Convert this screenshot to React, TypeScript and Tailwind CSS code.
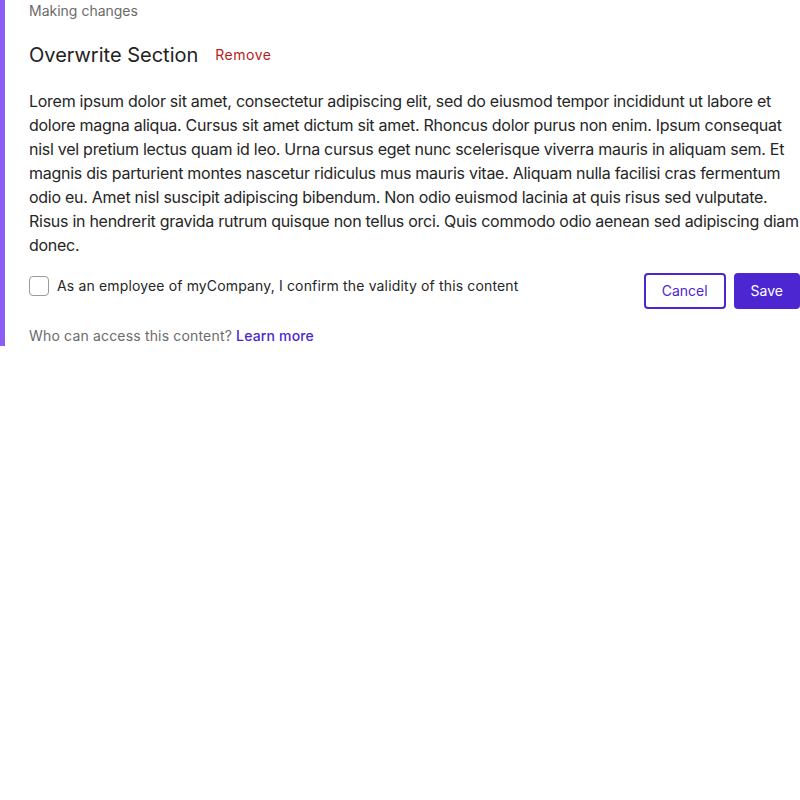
import { useState } from "react";

const body =
	"Lorem ipsum dolor sit amet, consectetur adipiscing elit, sed do eiusmod tempor incididunt ut labore et dolore magna aliqua. Cursus sit amet dictum sit amet. Rhoncus dolor purus non enim. Ipsum consequat nisl vel pretium lectus quam id leo. Urna cursus eget nunc scelerisque viverra mauris in aliquam sem. Et magnis dis parturient montes nascetur ridiculus mus mauris vitae. Aliquam nulla facilisi cras fermentum odio eu. Amet nisl suscipit adipiscing bibendum. Non odio euismod lacinia at quis risus sed vulputate. Risus in hendrerit gravida rutrum quisque non tellus orci. Quis commodo odio aenean sed adipiscing diam donec.";

const App = () => {
	const [confirmed, setConfirmed] = useState<boolean>(false);

	return (
		<div className="min-h-screen bg-white font-['Inter',sans-serif]">
			<div className="flex">
				<div className="w-[5px] shrink-0 bg-[#8b5cf6]" />
				<div className="flex-1 pl-6 pt-px">
					<p className="text-sm leading-5 text-[#6b6b6b]">Making changes</p>

					<div className="mt-5 flex items-center">
						<h2 className="text-xl leading-7 text-[#222222]">
							Overwrite Section
						</h2>
						<button className="ml-[17px] text-sm leading-5 tracking-[0.5px] text-[#b91c1c]">
							Remove
						</button>
					</div>

					<p className="mt-5 text-base leading-6 tracking-[-0.27px] text-[#262626]">
						{body}
					</p>

					<div className="mt-4 flex items-start justify-between">
						<label className="flex items-center gap-2 pt-[3px]">
							<input
								type="checkbox"
								checked={confirmed}
								onChange={(e) => setConfirmed(e.target.checked)}
								className="h-5 w-5 appearance-none rounded border border-[#9a9a9a] bg-white"
							/>
							<span className="text-sm leading-5 tracking-[0.15px] text-[#262626]">
								As an employee of myCompany, I confirm the validity of this
								content
							</span>
						</label>
						<div className="flex gap-2">
							<button className="h-9 rounded border-2 border-[#4b26d1] px-4 text-sm text-[#4b26d1]">
								Cancel
							</button>
							<button className="h-9 rounded bg-[#4b26d1] px-[17px] text-sm text-white">
								Save
							</button>
						</div>
					</div>

					<p className="mt-[17px] text-sm leading-5 tracking-[0.17px] text-[#6b6b6b]">
						Who can access this content?{" "}
						<a href="#" className="font-medium text-[#4b26d1]">
							Learn more
						</a>
					</p>
				</div>
			</div>
		</div>
	);
};

export default App;
